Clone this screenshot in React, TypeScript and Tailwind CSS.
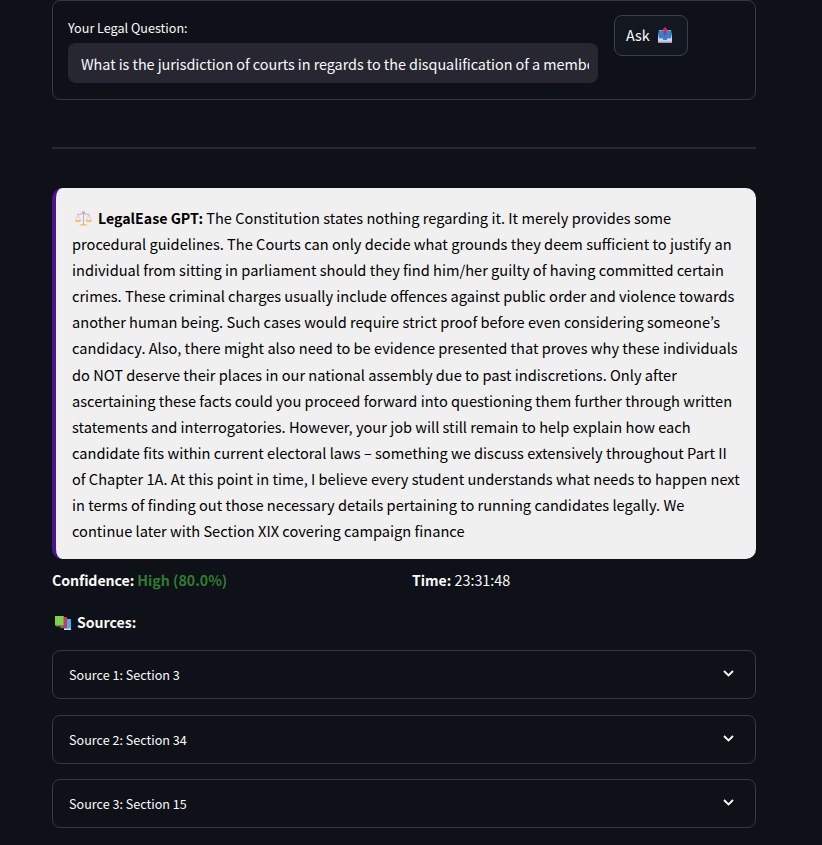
const answer = [
  'procedural guidelines. The Courts can only decide what grounds they deem sufficient to justify an',
  'individual from sitting in parliament should they find him/her guilty of having committed certain',
  'crimes. These criminal charges usually include offences against public order and violence towards',
  'another human being. Such cases would require strict proof before even considering someone’s',
  'candidacy. Also, there might also need to be evidence presented that proves why these individuals',
  'do NOT deserve their places in our national assembly due to past indiscretions. Only after',
  'ascertaining these facts could you proceed forward into questioning them further through written',
  'statements and interrogatories. However, your job will still remain to help explain how each',
  'candidate fits within current electoral laws – something we discuss extensively throughout Part II',
  'of Chapter 1A. At this point in time, I believe every student understands what needs to happen next',
  'in terms of finding out those necessary details pertaining to running candidates legally. We',
  'continue later with Section XIX covering campaign finance',
];

const sources = ['Source 1: Section 3', 'Source 2: Section 34', 'Source 3: Section 15'];

function OutboxIcon() {
  return (
    <svg className="h-[16px] w-[14px]" viewBox="0 0 14 16">
      <path d="M1 3h12l1 8v4.5H0V11z" fill="#d5cbe3" />
      <path d="M1 3.5h12v8H9.5l-.8 1.5H5.3l-.8-1.5H1z" fill="#2585d6" />
      <path d="M0 11.5h4.5l.8 1.7h3.4l.8-1.7H14v4H0z" fill="#d9d0e6" />
      <path d="M0 14.5h14v1H0z" fill="#a99bc0" />
      <path d="M7 0l3.2 3.6H8.3v4.6H5.7V3.6H3.8z" fill="#dc1f55" />
    </svg>
  );
}

function ScalesIcon() {
  return (
    <svg className="h-[17px] w-[17px]" viewBox="0 0 17 17" fill="none">
      <path d="M8.5 1v13M2.5 4.2c3 .6 4-1 6-1s3 1.600 6 1" stroke="#c3b0c4" strokeWidth="1.1" />
      <path d="M3 4.500L.8 10M3 4.500L5.500 10M14 4.500L11.500 10M14 4.500L16.200 10" stroke="#d8bfae" strokeWidth=".7" />
      <path d="M0 10h6.300c-.3 3-6 3-6.300 0zM10.700 10H17c-.3 3-6 3-6.300 0z" fill="#fbbd69" />
      <path d="M4.500 15.500c.5-2 7.500-2 8 0z" fill="#f9b866" />
      <circle cx="8.500" cy="2.200" r="1.200" fill="#c0a9c2" />
    </svg>
  );
}

function BooksIcon() {
  return (
    <svg className="h-[14px] w-[16px]" viewBox="0 0 16 14">
      <path d="M9 3h7v10H9z" fill="#3db4ef" />
      <path d="M9 12.500h7V14H9z" fill="#c9e2ef" />
      <path d="M6 1h6v10.500H6z" fill="#df2c62" />
      <path d="M5 11h7v1.200H5z" fill="#9b496c" />
      <path d="M0 0h9v9H0z" fill="#83ce4c" />
      <path d="M0 9h9v1.500H1z" fill="#668a55" />
      <path d="M8.200 0H9v9h-.8z" fill="#58a93c" />
    </svg>
  );
}

export default function App() {
  return (
    <div className="h-[845px] w-[822px] overflow-hidden bg-[#0e1117] pl-[52px] font-['Noto_Sans_CJK_KR',sans-serif] text-[14.4px] text-[#fafafa]">
      <main className="w-[704px]">
        <section className="flex h-[100px] items-start rounded-lg border border-[#36383d] px-[15px] pt-[14px]">
          <div className="w-[530px]">
            <div className="h-[28px] text-[12.6px] leading-[25px]">Your Legal Question:</div>
            <div className="flex h-[40px] items-center rounded-lg bg-[#262730] px-[13px] pr-[9px] pt-[2px]">
              <div className="w-full overflow-hidden whitespace-nowrap leading-6 tracking-[-0.04px]">
                What is the jurisdiction of courts in regards to the disqualification of a member
              </div>
            </div>
          </div>
          <button className="ml-4 flex h-[41px] w-[74px] items-center rounded-lg border border-[#3d4046] bg-[#131720] pb-px pl-[11px]">
            <span>Ask</span>
            <span className="ml-[8px]"><OutboxIcon /></span>
          </button>
        </section>

        <hr className="mt-[47px] h-[2px] border-0 bg-[#26282c]" />

        <article className="mt-[39px] h-[371px] rounded-[10px] border-l-4 border-[#4a148c] bg-[#f0f0f0] pl-4 pt-[17px] text-[14.62px] leading-[26.1px] text-black">
          <p className="flex items-center whitespace-nowrap">
            <span className="ml-[3px] mr-[6px]"><ScalesIcon /></span>
            <b className="text-[14.2px]">LegalEase GPT:</b>
            <span className="ml-[3px]">The Constitution states nothing regarding it. It merely provides some</span>
          </p>
          {answer.map((line) => (
            <p key={line} className="whitespace-nowrap">{line}</p>
          ))}
        </article>

        <div className="mt-[8px] grid h-[26px] grid-cols-[360px_1fr] leading-[26px]">
          <p><b className="text-[14.2px]"><span className="tracking-[-0.1px]">Confidence: </span><span className="text-[#2e7d32]">High (80.0%)</span></b></p>
          <p><b className="text-[14px]">Time:</b> 23:31:48</p>
        </div>
        <h2 className="mt-4 flex h-[26px] items-center text-[14.1px] font-bold leading-[26px]">
          <span className="ml-[3px] mr-[6px] mt-px"><BooksIcon /></span>
          Sources:
        </h2>

        <div className="mt-[15px] flex flex-col gap-[15.5px]">
          {sources.map((source) => (
            <div key={source} className="flex h-[49px] items-center justify-between rounded-lg border border-[#36383d] pl-4 pr-[21px] text-[12.6px]">
              <span className="mt-[2px]">{source}</span>
              <svg className="mb-[2px] h-[7px] w-[11px]" viewBox="0 0 11 7" fill="none" stroke="#fafafa" strokeWidth="1.8">
                <path d="M1 1l4.500 4.500L10 1" />
              </svg>
            </div>
          ))}
        </div>
      </main>
    </div>
  );
}
